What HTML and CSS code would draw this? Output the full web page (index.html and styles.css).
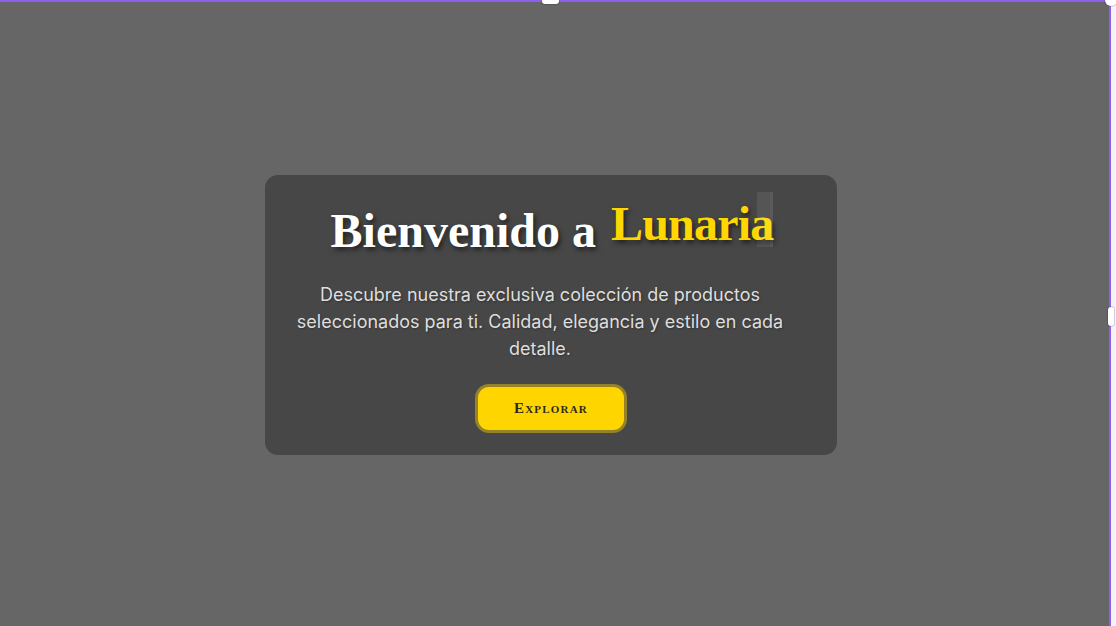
FILE: index.html
```html
<!DOCTYPE html>
<html lang="es">
<head>
<meta charset="utf-8">
<title>Lunaria</title>
<link rel="stylesheet" href="styles.css">
</head>
<body>
<div class="frame">
  <section class="hero-card">
    <h1 class="hero-title">Bienvenido a <span class="brand">Lunaria</span></h1>
    <p class="hero-text">Descubre nuestra exclusiva colección de productos seleccionados para ti. Calidad, elegancia y estilo en cada detalle.</p>
    <button class="hero-btn" type="button">Explorar</button>
  </section>
  <span class="handle handle-top"></span>
  <span class="handle handle-corner"></span>
  <span class="handle handle-side"></span>
</div>
</body>
</html>
```

FILE: styles.css
```css
html, body {
  margin: 0;
  padding: 0;
  height: 100%;
  overflow: hidden;
  background: #f4f4f6;
}

.frame {
  position: relative;
  width: 1111px;
  height: 626px;
  box-sizing: border-box;
  background: #666666;
  border-top: 2px solid #8f5ff0;
  border-right: 2px solid #8f5ff0;
  padding: 2px 7px 0 0;
  display: flex;
  align-items: center;
  justify-content: center;
}

.hero-card {
  width: 572px;
  height: 280px;
  box-sizing: border-box;
  background: #474747;
  border-radius: 13px;
  padding: 17px 30px 22px;
  display: flex;
  flex-direction: column;
  align-items: center;
}

.hero-title {
  margin: 0;
  padding-left: 2px;
  font-family: "Liberation Serif", "Times New Roman", serif;
  font-weight: 700;
  font-size: 48px;
  line-height: 1.2;
  color: #ffffff;
  text-shadow: 2px 3px 5px rgba(0, 0, 0, 0.55);
  white-space: nowrap;
}

.brand {
  position: relative;
  display: inline-block;
  vertical-align: 7px;
  margin-left: 3px;
  padding-top: 7px;
  line-height: 50px;
  letter-spacing: -0.8px;
  color: #ffd700;
}

.brand::after {
  content: "";
  position: absolute;
  top: 0;
  right: 0;
  width: 13px;
  height: 55px;
  background: rgba(255, 255, 255, 0.08);
  border-right: 3px solid rgba(255, 255, 255, 0.04);
}

.hero-text {
  align-self: flex-start;
  width: 490px;
  margin: 21px 0 0;
  font-family: "Inter", "Open Sans", sans-serif;
  font-size: 18px;
  line-height: 27px;
  text-align: center;
  color: #dedede;
  text-shadow: 1px 1px 2px rgba(0, 0, 0, 0.3);
}

.hero-btn {
  margin-top: 25px;
  width: 146px;
  height: 43px;
  border: none;
  border-radius: 11px;
  background: #ffd500;
  box-shadow: 0 0 0 3px rgba(255, 215, 0, 0.42);
  font-family: "Liberation Serif", "Times New Roman", serif;
  font-variant: small-caps;
  font-weight: 700;
  font-size: 15px;
  letter-spacing: 1.2px;
  color: #2e2a1a;
  cursor: pointer;
}

.handle {
  position: absolute;
  background: #ffffff;
  box-shadow: 0 0 0 1px rgba(0, 0, 0, 0.15);
}

.handle-top {
  left: 542px;
  top: -6px;
  width: 17px;
  height: 8px;
  border-radius: 3px;
}

.handle-corner {
  right: -8px;
  top: -8px;
  width: 12px;
  height: 12px;
  border-radius: 50%;
}

.handle-side {
  right: -5px;
  top: 305px;
  width: 6px;
  height: 19px;
  border-radius: 3px;
}
```
